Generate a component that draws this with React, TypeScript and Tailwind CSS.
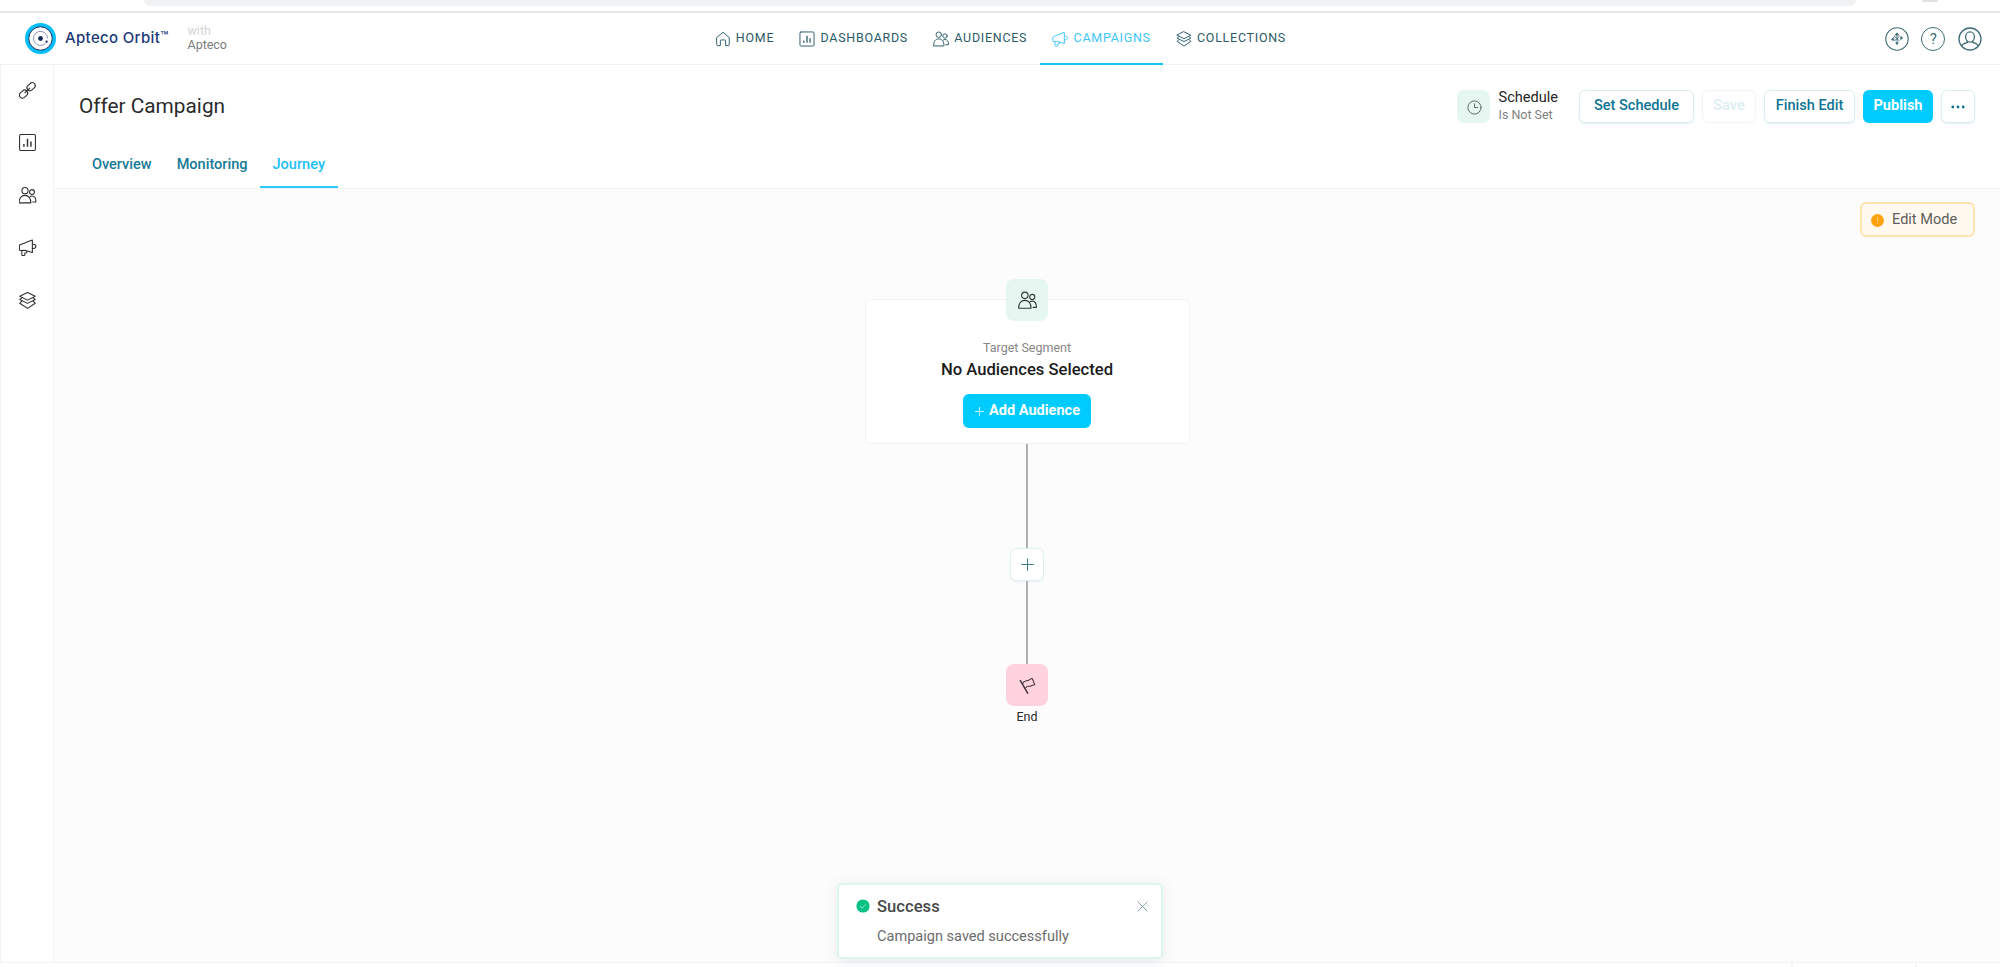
import type { ReactNode, SVGProps } from "react";

type IconProps = SVGProps<SVGSVGElement>;

function Svg({ children, ...rest }: IconProps & { children: ReactNode }) {
  return (
    <svg
      viewBox="0 0 20 20"
      fill="none"
      stroke="currentColor"
      strokeWidth="1.2"
      strokeLinejoin="round"
      strokeLinecap="round"
      {...rest}
    >
      {children}
    </svg>
  );
}

const HomeIcon = (p: IconProps) => (
  <Svg {...p}>
    <path d="M2.2 8.2 10 1.6l7.8 6.6v9.2a.9.9 0 0 1-.9.9h-3.6v-6.2a.9.9 0 0 0-.9-.9H7.6a.9.9 0 0 0-.9.9v6.2H3.1a.9.9 0 0 1-.9-.9Z" />
  </Svg>
);
const ChartIcon = (p: IconProps) => (
  <Svg {...p}>
    <rect x="1.2" y="1.2" width="17.6" height="17.6" rx="1.4" />
    <path d="M6 11.8v3M10 5.8v9M13.8 9v5.8" strokeWidth="1.6" strokeLinecap="butt" />
  </Svg>
);
const PeopleIcon = (p: IconProps) => (
  <Svg {...p}>
    <circle cx="7.2" cy="4.6" r="3.4" />
    <path d="M.7 18.2c0-5.4 2.5-8.3 6.5-8.3s6.5 2.9 6.5 8.3Z" />
    <circle cx="15" cy="6.2" r="2.7" />
    <path d="M12.9 11.2c.6-.4 1.3-.6 2.1-.6 2.8 0 4.4 2.4 4.4 6.6h-3.6" />
  </Svg>
);
const MegaphoneIcon = (p: IconProps) => (
  <Svg {...p}>
    <path d="M1 8.1c0-.5.3-.9.8-1.1L15.4 1.6v14L6.9 13 2 13.3a1 1 0 0 1-1-1Z" />
    <path d="M3.7 13.3v4.9c0 .4.3.6.6.6h2.1c.3 0 .6-.2.6-.6v-2.1l2.2-.3v-2" />
    <path d="M15.4 6.3h1.3c1.4 0 2.5 1 2.5 2.4s-1.1 2.4-2.5 2.4h-1.3" />
  </Svg>
);
const LayersIcon = (p: IconProps) => (
  <Svg {...p}>
    <path d="M10 1 18.6 5.3 10 9.6 1.4 5.3Z" />
    <path d="m3.6 7-2.2 2L10 13.2 18.6 9l-2.2-2" />
    <path d="m3.6 10.8-2.2 2.3L10 18.8l8.6-5.7-2.2-2.3" />
  </Svg>
);
const LinkIcon = (p: IconProps) => (
  <Svg {...p}>
    <rect x="-5" y="-3.3" width="10" height="6.6" rx="3.3" transform="translate(14 5.8) rotate(-42)" />
    <rect x="-5" y="-3.3" width="10" height="6.6" rx="3.3" transform="translate(5.6 14) rotate(-42)" />
    <path d="m7.2 12.5 5.4-5.2" />
  </Svg>
);
const ClockIcon = (p: IconProps) => (
  <Svg {...p}>
    <circle cx="10" cy="10" r="8.8" />
    <path d="M10 5v5h4.2" />
  </Svg>
);
const FlagIcon = (p: IconProps) => (
  <Svg {...p}>
    <path d="M1.6 4.4 10.2 19" strokeWidth="1.7" />
    <path d="M4.4 7.6C6 3.6 9.4 5 11.6 3.6c1.6-1 2.8-2 4-1.9l3 7.5c-2-.6-3.4 1.2-5.4 1.6-2.4.4-4-.5-5.4 2" />
  </Svg>
);
const PlusIcon = (p: IconProps) => (
  <Svg {...p}>
    <path d="M10 1v18M1 10h18" />
  </Svg>
);
const CloseIcon = (p: IconProps) => (
  <Svg {...p}>
    <path d="m1.5 1.5 17 17M18.5 1.5l-17 17" />
  </Svg>
);
const CompassIcon = (p: IconProps) => (
  <svg viewBox="0 0 24 24" fill="none" stroke="currentColor" strokeWidth="1.1" {...p}>
    <circle cx="12" cy="12" r="11.2" />
    <path d="M12 6.4v11M9 9l5.6 5M14.6 9.2l-5 4.6" strokeWidth="0.9" />
    <path
      d="m12 5.8 2.2 2.4H9.8ZM12 17.8l1.5-2.2h-3ZM6.2 12.8l2.4-2.6.6 3.6ZM18 11.2l-2.2-2.2-.4 3.8Z"
      fill="currentColor"
      strokeWidth="0.4"
    />
  </svg>
);
const UserIcon = (p: IconProps) => (
  <svg viewBox="0 0 24 24" fill="none" stroke="currentColor" strokeWidth="1.3" {...p}>
    <circle cx="12" cy="12" r="11" />
    <ellipse cx="12" cy="10" rx="4.4" ry="5.1" />
    <path d="M3.8 19.2c.6-2.2 2.4-2.9 5.6-3.8v-1.6M20.2 19.2c-.6-2.2-2.4-2.9-5.6-3.8v-1.6" />
  </svg>
);
const OrbitLogo = (p: IconProps) => (
  <svg viewBox="0 0 32 32" fill="none" {...p}>
    <circle cx="16" cy="16" r="16" fill="#04bdfb" />
    <circle cx="16" cy="16" r="12.1" fill="#fff" stroke="#1b2f55" strokeWidth="1" />
    <path d="M21.3 20.9A7.3 7.3 0 1 1 23.3 16" stroke="#7d8aa5" strokeWidth="0.9" />
    <circle cx="16" cy="16" r="2.5" fill="#152c5b" />
    <circle cx="22.3" cy="19.3" r="1.2" fill="#152c5b" />
  </svg>
);

const navItems = [
  { label: "HOME", Icon: HomeIcon, active: false },
  { label: "DASHBOARDS", Icon: ChartIcon, active: false },
  { label: "AUDIENCES", Icon: PeopleIcon, active: false },
  { label: "CAMPAIGNS", Icon: MegaphoneIcon, active: true },
  { label: "COLLECTIONS", Icon: LayersIcon, active: false },
];

const sideItems = [LinkIcon, ChartIcon, PeopleIcon, MegaphoneIcon, LayersIcon];

const outlineButton =
  "flex h-[33px] items-center justify-center rounded-[6px] border border-[#dceef1] bg-white pb-px text-[14.56px] font-medium text-[#0f7593] shadow-[0_1px_2px_rgba(15,117,147,0.12)]";

function BrowserEdge() {
  return (
    <div className="flex h-[13px] shrink-0 items-start border-b-2 border-[#e4e5e6] bg-white pl-[144px]">
      <div className="h-[6px] w-[1712px] rounded-b-[14px] bg-[#f1f2f4]" />
      <div className="ml-[66px] h-[2px] w-[16px] rounded-b-full bg-[#dfe1e5]" />
    </div>
  );
}

function TopBar() {
  return (
    <header className="flex h-[52px] shrink-0 border-b border-[#f0f1f2] bg-white">
      <div className="flex w-[702px] items-start pl-[25px] pt-[10px]">
        <OrbitLogo className="size-[31px]" />
        <div className="ml-[9px] mt-[5px] flex w-[105px] whitespace-nowrap text-[#1c3a78]">
          <span className="font-['Inter'] text-[15px] font-medium leading-[20px] tracking-[0.34px]">Apteco Orbit</span>
          <span className="font-['Inter'] text-[13px] font-medium leading-[17px]">™</span>
        </div>
        <div className="ml-[17.5px] mt-[1px] text-[12.48px] leading-[14px]">
          <div className="text-[#d3d3d3]">with</div>
          <div className="text-[#7b7b7b]">Apteco</div>
        </div>
      </div>
      <nav className="flex h-[52px]">
        {navItems.map(({ label, Icon, active }) => (
          <div
            key={label}
            className={
              active
                ? "flex items-center border-b-2 border-[#14c4fb] px-[12.5px] pt-px text-[#3fc6fa]"
                : "flex items-center border-b-2 border-transparent px-[12.5px] pt-px text-[#2c5b68]"
            }
          >
            <Icon className="size-[16px]" />
            <span className="ml-[5.3px] text-[12.48px] tracking-[0.74px]">{label}</span>
          </div>
        ))}
      </nav>
      <div className="ml-auto flex gap-[12.6px] pr-[18px] pt-[14px] text-[#3f6b77]">
        <CompassIcon className="size-[24px]" />
        <div className="flex size-[24px] items-center justify-center rounded-full border border-[#3f6b77] text-[15px]">
          ?
        </div>
        <UserIcon className="size-[24px]" />
      </div>
    </header>
  );
}

function SideBar() {
  return (
    <aside className="flex w-[54px] shrink-0 flex-col items-center gap-[33.4px] border-x border-[#f2f2f3] bg-white pl-px pt-[16px] text-[#2f2f2f]">
      {sideItems.map((Icon, i) => (
        <Icon key={i} className="size-[19px] shrink-0 p-[0.5px]" />
      ))}
    </aside>
  );
}

function PageHeader() {
  return (
    <div className="flex h-[124px] shrink-0 flex-col border-b border-[#f2f2f3] bg-white">
      <div className="flex h-[82px] items-start pl-[25px] pr-[25px] pt-[25px]">
        <h1 className="mt-[3px] text-[20.8px] leading-[26px] text-[#2b2b2b]">Offer Campaign</h1>
        <div className="ml-auto flex">
          <div className="flex size-[33px] items-center justify-center rounded-[7px] bg-[#e6f7f2] pl-px pt-px text-[#545c5a]">
            <ClockIcon className="size-[15px]" />
          </div>
          <div className="-mt-px ml-[8.5px] w-[80.5px] whitespace-nowrap">
            <div className="text-[14.56px] leading-[16px] text-[#262626]">Schedule</div>
            <div className="mt-px text-[12.48px] leading-[17px] text-[#7f7f7f]">Is Not Set</div>
          </div>
          <div className="flex gap-[8px]">
            <button className={`${outlineButton} w-[115px]`}>Set Schedule</button>
            <button className="flex h-[33px] w-[54px] items-center justify-center rounded-[6px] border border-[#edf7f8] bg-white pb-px text-[14.56px] font-medium text-[#dceef1]">
              Save
            </button>
            <button className={`${outlineButton} w-[91px]`}>Finish Edit</button>
            <button className="flex h-[33px] w-[70px] items-center justify-center rounded-[6px] bg-[#00cbff] pb-px text-[14.56px] font-bold text-white">
              Publish
            </button>
            <button className={`${outlineButton} w-[34px]`}>
              <svg viewBox="0 0 14 4" className="mt-[2px] h-[4px] w-[14px]" fill="currentColor">
                <circle cx="1.8" cy="2" r="1.4" />
                <circle cx="7" cy="2" r="1.4" />
                <circle cx="12.2" cy="2" r="1.4" />
              </svg>
            </button>
          </div>
        </div>
      </div>
      <div className="flex h-[42px] shrink-0 pl-[25.4px] text-[14.56px] font-medium text-[#177a97]">
        <div className="px-[12.5px] pt-[8px]">Overview</div>
        <div className="px-[12.5px] pt-[8px]">Monitoring</div>
        <div className="border-b-2 border-[#2ccbfb] px-[12.5px] pt-[8px] text-[#22c0fa]">Journey</div>
      </div>
    </div>
  );
}

function Journey() {
  return (
    <div className="flex flex-col items-center">
      <div className="flex h-[145px] w-[325px] flex-col items-center rounded-[5px] border border-[#f1f2f2] bg-white">
        <div className="-mt-[21px] flex size-[42px] shrink-0 items-center justify-center rounded-[8px] bg-[#e6f7f2] text-[#333937]">
          <PeopleIcon className="size-[19px]" />
        </div>
        <div className="mt-[18px] text-[12.48px] leading-[18px] text-[#868686]">Target Segment</div>
        <div className="mt-[2px] text-[16.64px] font-medium leading-[22px] text-[#1c1c1c]">No Audiences Selected</div>
        <button className="mt-[13px] flex h-[34px] w-[128px] items-center justify-center rounded-[6px] bg-[#00cbff] pb-px text-[14.56px] font-bold text-white">
          <PlusIcon className="ml-px mr-[5px] mt-px size-[9px]" strokeWidth="1.8" />
          Add Audience
        </button>
      </div>
      <div className="h-[104px] w-[2px] bg-[#b0b0b0]" />
      <div className="flex h-[33px] w-[34px] items-center justify-center rounded-[6px] border border-[#dff0f2] bg-white text-[#3d7d8f] shadow-[0_1px_2px_rgba(15,117,147,0.08)]">
        <PlusIcon className="size-[13px]" strokeWidth="1.6" />
      </div>
      <div className="h-[83px] w-[2px] bg-[#b0b0b0]" />
      <div className="flex size-[42px] items-center justify-center rounded-[8px] bg-[#ffd2de] text-[#3d2f38]">
        <FlagIcon className="size-[17px]" />
      </div>
      <div className="mt-[2px] text-[12.48px] leading-[18px] text-[#2a2a2a]">End</div>
    </div>
  );
}

function Toast() {
  return (
    <div className="absolute left-[837px] top-[883px] flex h-[76px] w-[326px] items-start rounded-[5px] border-2 border-[#dcf6ee] bg-white pl-[17px] pr-[13px] shadow-[0_2px_14px_rgba(60,100,130,0.12)]">
      <svg viewBox="0 0 14 14" className="mt-[14px] size-[14px]" fill="none">
        <circle cx="7" cy="7" r="6.6" fill="#06c184" />
        <path d="m4 7.2 2.1 2L10 5.2" stroke="#9be8cd" strokeWidth="1" />
      </svg>
      <div className="ml-[7px]">
        <div className="mt-[11px] text-[16.64px] font-medium leading-[22px] text-[#474747]">Success</div>
        <div className="mt-[9px] text-[14.56px] leading-[18px] text-[#6c6c6c]">Campaign saved successfully</div>
      </div>
      <CloseIcon className="ml-auto mt-[16px] size-[11px] text-[#7f9ba3]" strokeWidth="1.7" />
    </div>
  );
}

export default function App() {
  return (
    <div className="relative flex h-[967px] w-[2000px] flex-col overflow-hidden bg-white font-['Roboto',sans-serif]">
      <BrowserEdge />
      <TopBar />
      <div className="flex h-[898px] shrink-0 border-b border-[#f2f2f3]">
        <SideBar />
        <main className="flex flex-1 flex-col">
          <PageHeader />
          <section className="flex flex-1 flex-col bg-[#fcfcfc]">
            <div className="flex justify-end pr-[25px] pt-[13px]">
              <div className="flex h-[35px] w-[115px] items-center rounded-[6px] border-2 border-[#fde3ae] bg-[#fff9f0] pl-[9px] text-[14.56px] text-[#5f5d5a]">
                <svg viewBox="0 0 14 14" className="mt-px size-[13px]" fill="none">
                  <circle cx="7" cy="7" r="6.9" fill="#ffa20a" />
                  <path d="M7 3.2v4.8M7 9.6v1.2" stroke="#ffd184" strokeWidth="1.1" />
                </svg>
                <span className="ml-[8px] mt-px">Edit Mode</span>
              </div>
            </div>
            <div className="flex justify-center pt-[62px]">
              <Journey />
            </div>
          </section>
        </main>
      </div>
      <div className="flex h-[4px] pl-[1791px]">
        <div className="w-[126px] border-x-2 border-[#f6f6f7]" />
      </div>
      <Toast />
    </div>
  );
}
